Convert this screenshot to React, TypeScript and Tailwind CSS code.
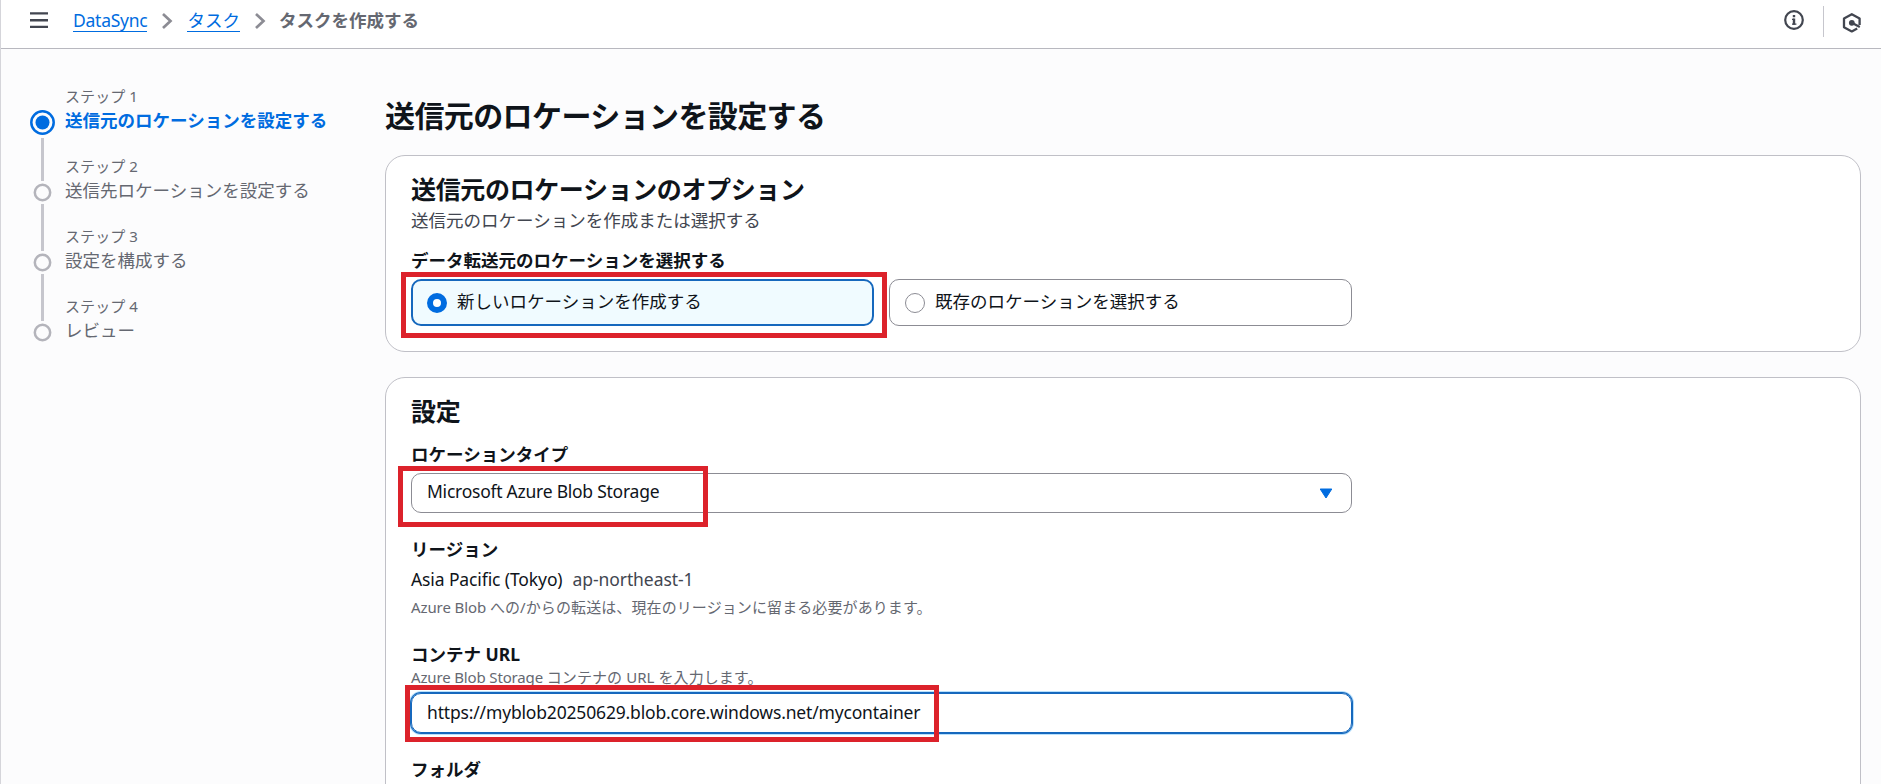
import type { ReactNode } from "react";

type Step = { label: string; title: string };

const steps: Step[] = [
  { label: "ステップ 1", title: "送信元のロケーションを設定する" },
  { label: "ステップ 2", title: "送信先ロケーションを設定する" },
  { label: "ステップ 3", title: "設定を構成する" },
  { label: "ステップ 4", title: "レビュー" },
];

function Chevron() {
  return (
    <svg className="h-[18px] w-3" viewBox="0 0 12 18" fill="none" stroke="#8c8c94" strokeWidth="2.7">
      <path d="M2 2 L9.5 9 L2 16" />
    </svg>
  );
}

function Header() {
  return (
    <header className="flex h-[49px] items-start border-b border-[#b8b8bf] bg-white pl-[29px]">
      <svg className="mt-[11px] h-[18px] w-[18px]" viewBox="0 0 18 18" stroke="#424650" strokeWidth="2.4">
        <path d="M0 2.4H18M0 9.2H18M0 15.9H18" />
      </svg>
      <nav className="ml-[25px] flex h-[42px] items-center">
        <a className="h-[21px] border-b border-[#006ce0] leading-[19px] tracking-[-0.25px] text-[#006ce0]">DataSync</a>
        <span className="ml-[14px]"><Chevron /></span>
        <a className="ml-[14px] h-[21px] border-b border-[#006ce0] leading-[19px] text-[#006ce0]">タスク</a>
        <span className="ml-[14px]"><Chevron /></span>
        <span className="ml-[13px] h-[21px] font-bold leading-[19px] text-[#656871]">タスクを作成する</span>
      </nav>
      <div className="ml-auto flex items-start pr-[19px]">
        <svg className="mt-[10px] h-5 w-5" viewBox="0 0 20 20" fill="none" stroke="#424650">
          <circle cx="10" cy="10" r="8.8" strokeWidth="2.2" />
          <path d="M10 5v2.2M10 8.6v6.2" strokeWidth="2.4" />
          <path d="M8 9.3h2M8 14.2h4.4" strokeWidth="1.2" />
        </svg>
        <div className="ml-[19px] mt-1.5 h-[31px] w-px bg-[#c6c6cd]" />
        <svg className="ml-[18px] mt-[12px] h-[21px] w-5" viewBox="0 0 20 21" fill="none" stroke="#424650">
          <path d="M17.6 13V6.4L9.8 2.2L2 6.4V15.2L9.8 19.4L15.2 16.6" strokeWidth="2.3" strokeLinejoin="round" />
          <circle cx="9.8" cy="10.8" r="2.9" fill="#424650" stroke="none" />
          <path d="M9.8 10.8L17.8 15" strokeWidth="2.2" />
        </svg>
      </div>
    </header>
  );
}

function StepMarker({ active, last }: { active: boolean; last: boolean }) {
  return (
    <div className="flex w-[25px] flex-col items-center">
      <svg className="mt-[22px] h-[25px] w-[25px] shrink-0" viewBox="0 0 25 25" fill="none">
        {active ? (
          <>
            <circle cx="12.5" cy="12.5" r="11.2" stroke="#006ce0" strokeWidth="2.5" />
            <circle cx="12.5" cy="12.5" r="7" fill="#006ce0" />
          </>
        ) : (
          <circle cx="12.5" cy="12.5" r="7.7" stroke="#b4b4bb" strokeWidth="2.5" />
        )}
      </svg>
      {!last && (
        <div className={active ? "mt-[3px] h-[43px] w-[3px] shrink-0 bg-[#c6c6cd]" : "-mt-px h-[47px] w-[3px] shrink-0 bg-[#c6c6cd]"} />
      )}
    </div>
  );
}

function Sidebar() {
  return (
    <aside className="w-[385px] shrink-0 pl-[29px] pt-[39px]">
      {steps.map((step, i) => (
        <div key={step.label} className="flex h-[70px]">
          <StepMarker active={i === 0} last={i === steps.length - 1} />
          <div className="-mt-[2px] ml-[10px]">
            <div className="h-5 text-[15px] leading-5 tracking-[0.075px] text-[#656871]">{step.label}</div>
            <div className={i === 0 ? "mt-[2px] font-bold leading-[25px] text-[#006ce0]" : "mt-[2px] leading-[25px] text-[#656871]"}>
              {step.title}
            </div>
          </div>
        </div>
      ))}
    </aside>
  );
}

function Card({ className, children }: { className: string; children: ReactNode }) {
  return (
    <section className={`rounded-[20px] border border-[#c0c0c7] bg-white px-[25px] ${className}`}>{children}</section>
  );
}

function Highlight({ className }: { className: string }) {
  return <div className={`pointer-events-none absolute border-[5px] border-[#dc222b] ${className}`} />;
}

function Label({ className, children }: { className: string; children: ReactNode }) {
  return <div className={`font-bold leading-[25px] ${className}`}>{children}</div>;
}

function LocationOptions() {
  return (
    <Card className="h-[197px]">
      <h2 className="mt-[16px] text-[25px] font-bold leading-[34px] tracking-[-0.375px]">送信元のロケーションのオプション</h2>
      <p className="mt-[2px] leading-[25px] text-[#424650]">送信元のロケーションを作成または選択する</p>
      <Label className="mt-[15px]">データ転送元のロケーションを選択する</Label>
      <div className="relative mt-[6px] flex gap-[15px]">
        <div className="flex h-[47px] w-[463px] items-center rounded-[10px] border-2 border-[#1668bd] bg-[#f0fbff] pl-3.5">
          <div className="h-5 w-5 rounded-full border-[6px] border-[#006ce0] bg-white" />
          <span className="mb-[2px] ml-[10px] leading-[25px]">新しいロケーションを作成する</span>
        </div>
        <div className="flex h-[47px] w-[463px] items-center rounded-[10px] border border-[#8c8c94] pl-[15px]">
          <div className="h-5 w-5 rounded-full border border-[#8c8c94] bg-white" />
          <span className="mb-[2px] ml-[10px] leading-[25px]">既存のロケーションを選択する</span>
        </div>
        <Highlight className="-left-[10px] -top-[7px] h-[66px] w-[486px]" />
      </div>
    </Card>
  );
}

function Settings() {
  return (
    <Card className="mt-[25px] h-[440px]">
      <h2 className="mt-[16px] text-[25px] font-bold leading-[34px] tracking-[-0.375px]">設定</h2>
      <Label className="mt-[14px]">ロケーションタイプ</Label>
      <div className="relative mt-[6px] w-[941px]">
        <div className="flex h-10 items-center justify-between rounded-[10px] border border-[#8c8c94] pl-[15px] pr-[18px]">
          <span className="mb-[3px] leading-[25px] tracking-[-0.25px]">Microsoft Azure Blob Storage</span>
          <svg className="h-[11px] w-[14px]" viewBox="0 0 14 11" fill="#006ce0" stroke="#006ce0" strokeLinejoin="round">
            <path d="M1.2 1H12.8L7 10Z" />
          </svg>
        </div>
        <Highlight className="-left-[13px] -top-[7px] h-[61px] w-[310px]" />
      </div>
      <Label className="mt-[24px]">リージョン</Label>
      <div className="mt-[5px] flex gap-[10px] leading-[25px]">
        <span className="tracking-[-0.11px]">Asia Pacific (Tokyo)</span>
        <span className="tracking-[-0.08px] text-[#424650]">ap-northeast-1</span>
      </div>
      <p className="mt-[5px] text-[15px] leading-5 tracking-[0.1px] text-[#656871]">
        <span className="tracking-[-0.1px]">Azure Blob </span>への/からの転送は、現在のリージョンに留まる必要があります。
      </p>
      <Label className="mt-[25px]">コンテナ URL</Label>
      <p className="text-[15px] leading-5 tracking-[0.075px] text-[#656871]">
        <span className="tracking-[-0.15px]">Azure Blob Storage </span>コンテナの <span>URL</span> を入力します。
      </p>
      <div className="relative mt-[6px] w-[941px]">
        <div className="flex h-10 items-center rounded-[10px] border border-[#1668bd] pl-[15px] shadow-[0_0_0_1px_#1668bd,0_0_0_2px_#b8e0fc]">
          <span className="mb-[2px] leading-[25px] tracking-[-0.17px]">https://myblob20250629.blob.core.windows.net/mycontainer</span>
        </div>
        <Highlight className="-left-[6px] -top-[8px] h-[57px] w-[534px]" />
      </div>
      <Label className="mt-[24px]">フォルダ</Label>
    </Card>
  );
}

export default function App() {
  return (
    <div className="h-[784px] w-full overflow-hidden border-l border-[#d5d5da] bg-[#fcfcfd] font-['Noto_Sans','Noto_Sans_CJK_JP',sans-serif] text-[17.5px] text-[#0f141a]" lang="ja">
      <Header />
      <div className="flex">
        <Sidebar />
        <main className="-ml-px w-[1476px] pt-[46px]">
          <h1 className="h-[60px] text-[30px] font-bold leading-[42px] tracking-[-0.6px]">送信元のロケーションを設定する</h1>
          <LocationOptions />
          <Settings />
        </main>
      </div>
    </div>
  );
}
